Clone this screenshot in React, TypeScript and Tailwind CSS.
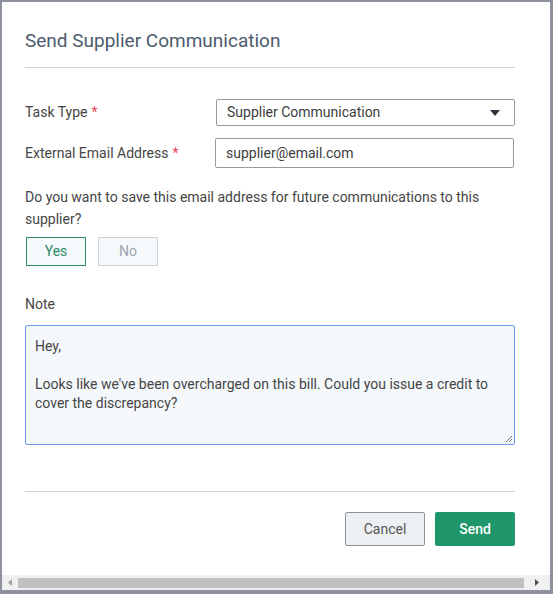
import React from 'react';

const font = { fontFamily: 'Roboto, "Liberation Sans", sans-serif' };

const Required = () => <span className="ml-1 text-[#e8475f]">*</span>;

export default function App() {
  return (
    <div className="w-[553px] h-[594px] bg-[#8d929c] pt-[2px] pl-[2px] pr-[3px] pb-[4px]" style={font}>
      <div className="w-full h-full bg-white flex flex-col">
        <div className="flex-1 pl-[23px] pr-[35px] pt-[25px]">
          {/* Header */}
          <h2 className="text-[19px] leading-[28px] text-[#4b5a6d] pb-[12px] border-b border-[#cdd4da]">
            Send Supplier Communication
          </h2>

          {/* Task type */}
          <div className="flex items-center mt-[31px]">
            <label className="w-[191px] text-[14px] text-[#454545]">
              Task Type<Required />
            </label>
            <div className="w-[299px] h-[27px] border border-[#9a9a9a] rounded-[2px] flex items-center justify-between pl-[10px] pr-[14px] text-[14px] text-[#3d3d3d]">
              <span>Supplier Communication</span>
              <svg width="10" height="6" viewBox="0 0 10 6">
                <path d="M0 0h10L5 6z" fill="#2d3440" />
              </svg>
            </div>
          </div>

          {/* Email */}
          <div className="flex items-center mt-[12px]">
            <label className="w-[190px] text-[14px] text-[#454545]">
              External Email Address<Required />
            </label>
            <div className="w-[299px] h-[30px] border border-[#9a9a9a] rounded-[2px] flex items-center pl-[10px] text-[14px] text-[#3d3d3d]">
              supplier@email.com
            </div>
          </div>

          {/* Save question */}
          <p className="mt-[18px] text-[14px] leading-[22px] text-[#454545] pr-[8px]">
            Do you want to save this email address for future communications to this supplier?
          </p>
          <div className="flex gap-[12px] mt-[7px] pl-[1px]">
            <button className="w-[60px] h-[29px] border border-[#2a8a66] bg-[#f5f9fb] text-[14px] text-[#2a8a66]">
              Yes
            </button>
            <button className="w-[60px] h-[29px] border border-[#c9d1d8] bg-[#f5f9fb] text-[14px] text-[#9ea6ae]">
              No
            </button>
          </div>

          {/* Note */}
          <div className="mt-[28px] text-[14px] leading-[20px] text-[#454545]">Note</div>
          <div className="relative mt-[11px] h-[120px] border border-[#6a9be8] rounded-[2px] bg-[#f5f8fb] pl-[9px] pt-[11px] pr-[20px] text-[14px] leading-[19px] text-[#454545]">
            <div>Hey,</div>
            <div className="h-[19px]" />
            <div>Looks like we've been overcharged on this bill. Could you issue a credit to cover the discrepancy?</div>
            <svg className="absolute right-[1px] bottom-[1px]" width="8" height="8" viewBox="0 0 8 8">
              <path d="M7 1L1 7M7 4L4 7" stroke="#777" strokeWidth="1" />
            </svg>
          </div>

          {/* Footer */}
          <div className="mt-[46px] border-t border-[#cdd4da] pt-[20px] flex justify-end gap-[10px]">
            <button className="w-[80px] h-[34px] rounded-[2px] border border-[#8e9297] bg-[#edf0f3] text-[14px] text-[#555]">
              Cancel
            </button>
            <button className="w-[80px] h-[34px] rounded-[2px] bg-[#1f976b] text-[14px] font-medium text-white">
              Send
            </button>
          </div>
        </div>

        {/* Horizontal scrollbar */}
        <div className="h-[15px] bg-[#f0f0f0] flex items-center">
          <div className="w-[16px] flex justify-center">
            <svg width="4" height="7" viewBox="0 0 4 7"><path d="M4 0v7L0 3.5z" fill="#a3a3a3" /></svg>
          </div>
          <div className="flex-1 h-[10px] bg-[#c1c1c1]" />
          <div className="w-[26px] flex justify-center">
            <svg width="4" height="7" viewBox="0 0 4 7"><path d="M0 0v7L4 3.5z" fill="#505050" /></svg>
          </div>
        </div>
      </div>
    </div>
  );
}
